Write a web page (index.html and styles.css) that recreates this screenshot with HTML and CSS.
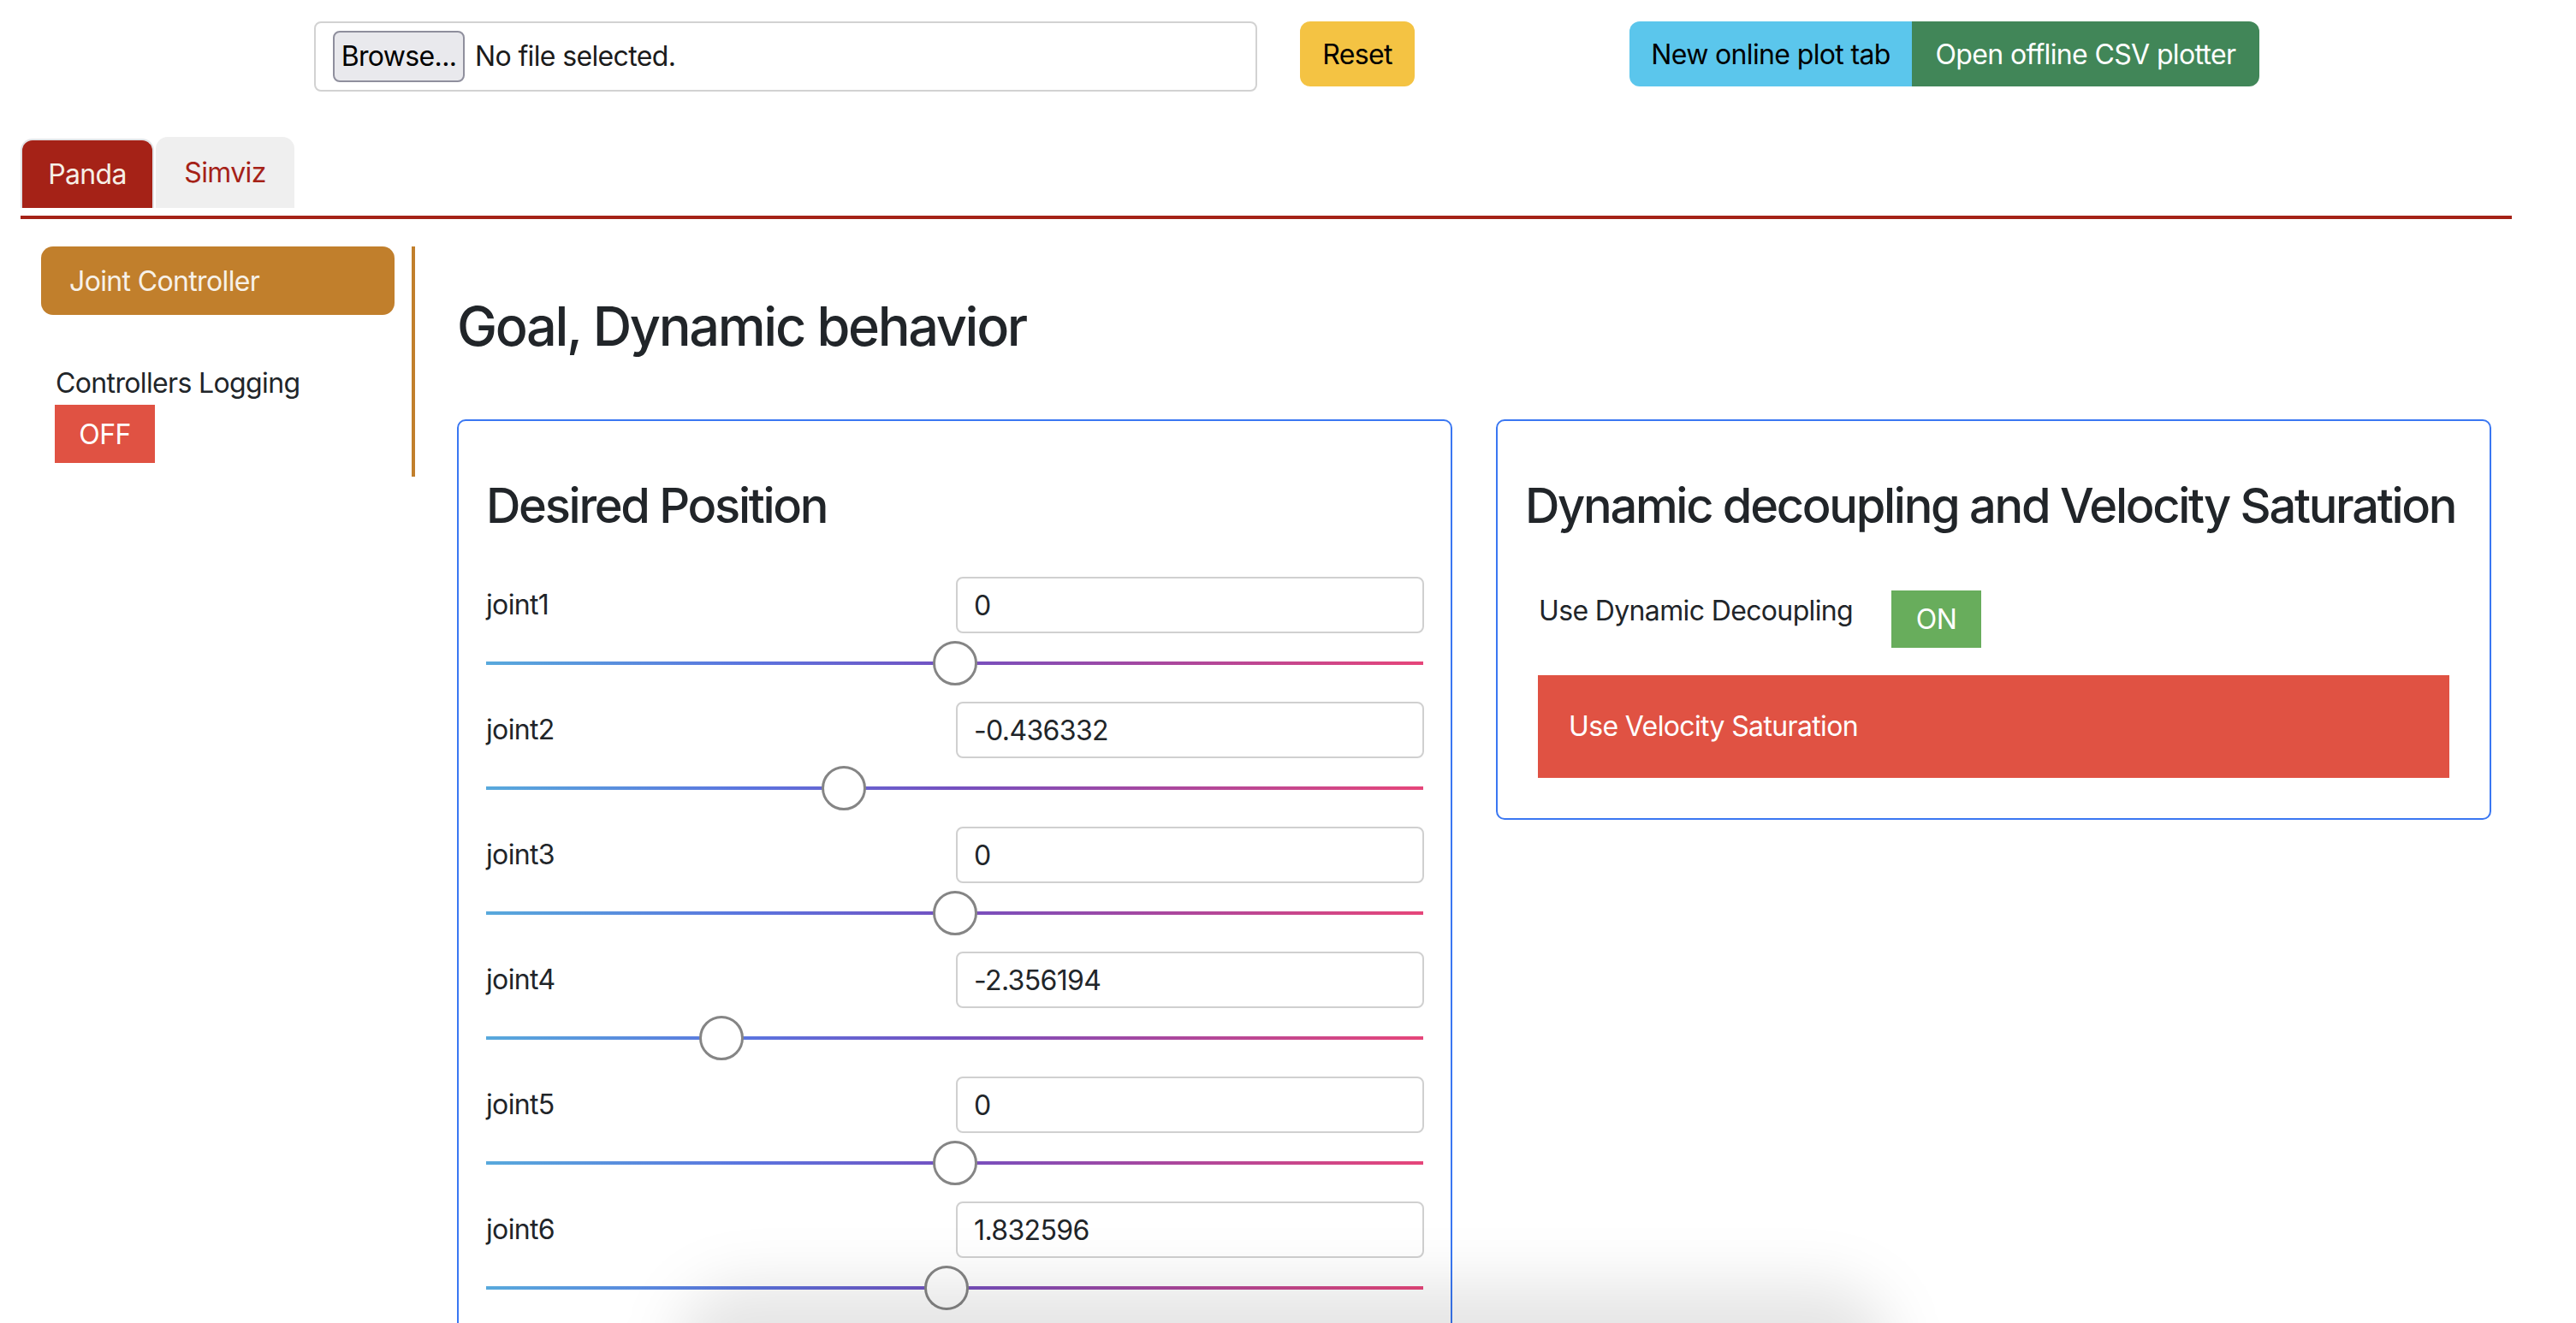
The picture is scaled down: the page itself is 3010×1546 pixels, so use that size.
FILE: index.html
```html
<!DOCTYPE html>
<html lang="en">
<head>
<meta charset="utf-8">
<title>Panda controller</title>
<link rel="stylesheet" href="styles.css">
</head>
<body>
<header class="topbar">
  <div class="file-input">
    <span class="browse">Browse...</span>
    <span class="nofile">No file selected.</span>
  </div>
  <button class="btn btn-reset">Reset</button>
  <div class="btn-group">
    <button class="btn btn-info">New online plot tab</button>
    <button class="btn btn-green">Open offline CSV plotter</button>
  </div>
</header>

<nav class="tabs">
  <div class="tab tab-active">Panda</div>
  <div class="tab">Simviz</div>
</nav>
<div class="tab-line"></div>

<main class="main">
  <aside class="sidebar">
    <button class="ctrl-btn">Joint Controller</button>
    <div class="logging">
      <div class="logging-label">Controllers Logging</div>
      <button class="toggle toggle-off">OFF</button>
    </div>
  </aside>

  <section class="content">
    <h2 class="page-title">Goal, Dynamic behavior</h2>
    <div class="cards">
      <div class="card">
        <h3 class="card-title">Desired Position</h3>
        <div class="joint">
          <div class="joint-head"><span class="joint-label">joint1</span><input class="joint-input" type="text" value="0"></div>
          <input class="range" type="range" min="-2.8973" max="2.8973" step="0.000001" value="0">
        </div>
        <div class="joint">
          <div class="joint-head"><span class="joint-label">joint2</span><input class="joint-input" type="text" value="-0.436332"></div>
          <input class="range" type="range" min="-1.7628" max="1.7628" step="0.000001" value="-0.436332">
        </div>
        <div class="joint">
          <div class="joint-head"><span class="joint-label">joint3</span><input class="joint-input" type="text" value="0"></div>
          <input class="range" type="range" min="-2.8973" max="2.8973" step="0.000001" value="0">
        </div>
        <div class="joint">
          <div class="joint-head"><span class="joint-label">joint4</span><input class="joint-input" type="text" value="-2.356194"></div>
          <input class="range" type="range" min="-3.0718" max="-0.0698" step="0.000001" value="-2.356194">
        </div>
        <div class="joint">
          <div class="joint-head"><span class="joint-label">joint5</span><input class="joint-input" type="text" value="0"></div>
          <input class="range" type="range" min="-2.8973" max="2.8973" step="0.000001" value="0">
        </div>
        <div class="joint">
          <div class="joint-head"><span class="joint-label">joint6</span><input class="joint-input" type="text" value="1.832596"></div>
          <input class="range" type="range" min="-0.0175" max="3.7525" step="0.000001" value="1.832596">
        </div>
      </div>

      <div class="card card-short">
        <h3 class="card-title">Dynamic decoupling and Velocity Saturation</h3>
        <div class="option-row">
          <span class="option-label">Use Dynamic Decoupling</span>
          <button class="toggle toggle-on">ON</button>
        </div>
        <div class="sat-bar">Use Velocity Saturation</div>
      </div>
    </div>
  </section>
</main>

<div class="dock-shadow"></div>
</body>
</html>
```

FILE: styles.css
```css
* { box-sizing: border-box; }

html, body {
  margin: 0;
  padding: 0;
  background: #ffffff;
}

body {
  font-family: Inter, "Noto Sans", "Liberation Sans", sans-serif;
  font-size: 32px;
  line-height: 1.5;
  color: #212529;
  letter-spacing: -0.02em;
}

button, input {
  font-family: inherit;
  font-size: 32px;
  letter-spacing: inherit;
}

/* ---------- top bar ---------- */
.topbar {
  display: flex;
  align-items: flex-start;
  padding: 25px 0 0 367px;
}

.file-input {
  width: 1102px;
  height: 82px;
  border: 2px solid #d2d2d2;
  border-radius: 8px;
  display: flex;
  align-items: center;
  padding-left: 20px;
}

.browse {
  height: 60px;
  width: 154px;
  border: 2px solid #8f8f9d;
  background: #e9e9ed;
  border-radius: 8px;
  color: #000;
  display: flex;
  align-items: center;
  justify-content: center;
}

.nofile {
  margin-left: 12px;
  color: #1b1b1b;
}

.btn {
  height: 76px;
  border: none;
  padding: 0 26px;
  line-height: 78px;
  cursor: pointer;
}

.btn-reset {
  margin-left: 50px;
  width: 134px;
  padding: 0;
  background: #f4c343;
  color: #000;
  border-radius: 12px;
}

.btn-group {
  margin-left: 251px;
  display: flex;
}

.btn-info {
  width: 330px;
  padding: 0;
  background: #5bc6ec;
  color: #000;
  border-radius: 12px 0 0 12px;
}

.btn-green {
  width: 406px;
  padding: 0;
  background: #418658;
  color: #fff;
  border-radius: 0 12px 12px 0;
}

/* ---------- tabs ---------- */
.tabs {
  display: flex;
  align-items: flex-end;
  gap: 2px;
  margin: 53px 0 0 24px;
  height: 83px;
}

.tab {
  height: 83px;
  width: 162px;
  background: #efefef;
  color: #a52217;
  border-radius: 14px 14px 0 0;
  display: flex;
  align-items: center;
  justify-content: center;
}

.tab-active {
  height: 81px;
  width: 156px;
  background: #a52217;
  color: #f6efe6;
  border: 2px solid #e2e3e6;
  border-bottom: none;
}

.tab-line {
  margin: 9px 0 0 24px;
  width: 2911px;
  height: 4px;
  background: #a52217;
}

/* ---------- main ---------- */
.main {
  display: flex;
  align-items: flex-start;
  padding: 32px 0 0 48px;
}

.sidebar {
  width: 437px;
  height: 269px;
  flex: none;
  border-right: 4px solid #c17f2c;
  padding-right: 20px;
}

.ctrl-btn {
  display: block;
  width: 413px;
  height: 80px;
  border: none;
  border-radius: 14px;
  background: #c17f2c;
  color: #f7f1e8;
  text-align: left;
  padding: 0 0 0 33px;
}

.logging {
  margin-top: 56px;
  padding-left: 16px;
}

.logging-label {
  padding-left: 1px;
}

.toggle {
  border: none;
  border-radius: 0;
  color: #fff;
  padding: 0;
  display: block;
}

.toggle-off {
  width: 117px;
  height: 68px;
  margin-top: 1px;
  background: #e05243;
}

.toggle-on {
  width: 105px;
  height: 67px;
  background: #68ad5c;
}

/* ---------- content ---------- */
.content {
  margin-left: 49px;
  flex: none;
  width: 2377px;
}

.page-title {
  margin: 55px 0 70px;
  font-size: 63px;
  font-weight: 500;
  line-height: 1.22;
  letter-spacing: -0.037em;
  white-space: nowrap;
}

.cards {
  display: flex;
  align-items: flex-start;
  gap: 51px;
}

.card {
  width: 1163px;
  border: 2px solid #3a77f2;
  border-radius: 10px;
  padding: 66px 32px 47px;
}

.card-title {
  margin: 0;
  font-size: 56px;
  font-weight: 500;
  line-height: 1.2;
  letter-spacing: -0.041em;
  white-space: nowrap;
}

.joint {
  margin-top: 19px;
}

.joint:first-of-type {
  margin-top: 49px;
}

.joint-head {
  display: flex;
  align-items: center;
  height: 66px;
}

.joint-label {
  width: 549px;
  flex: none;
}

.joint-input {
  width: 547px;
  height: 66px;
  border: 2px solid #d0d0d0;
  border-radius: 8px;
  padding: 0 19px;
  color: #212529;
  background: #fff;
}

.range {
  -webkit-appearance: none;
  appearance: none;
  display: block;
  width: 100%;
  height: 52px;
  margin: 9px 0 0;
  padding: 0;
  background: transparent;
}

.range::-webkit-slider-runnable-track {
  height: 4px;
  border: none;
  background: linear-gradient(to right, #58a9dc 0%, #5b74df 28%, #7450c0 50%, #a8479f 72%, #e6467a 100%);
}

.range::-webkit-slider-thumb {
  -webkit-appearance: none;
  appearance: none;
  width: 52px;
  height: 52px;
  margin-top: -24px;
  border-radius: 50%;
  background: #ffffff;
  border: 3px solid #858585;
}

.option-row {
  display: flex;
  align-items: flex-start;
  margin-top: 65px;
  padding-left: 16px;
}

.option-label {
  width: 412px;
  flex: none;
}

.sat-bar {
  margin: 32px 15px 0;
  height: 120px;
  background: #e05243;
  color: #fff;
  display: flex;
  align-items: center;
  padding-left: 36px;
}

/* ---------- overlay shadow near the bottom edge ---------- */
.dock-shadow {
  position: fixed;
  left: 790px;
  width: 1420px;
  top: 1500px;
  height: 160px;
  border-radius: 80px;
  background: rgba(0, 0, 0, 0.10);
  filter: blur(34px);
  pointer-events: none;
}
```
